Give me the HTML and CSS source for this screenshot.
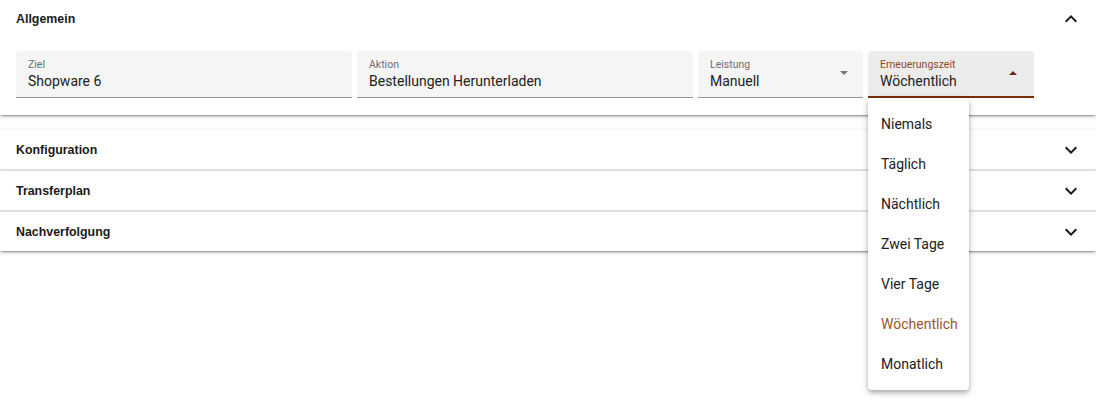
FILE: index.html
```html
<!DOCTYPE html>
<html>
<head>
  <title>Transfer bearbeiten</title>
  <link rel="stylesheet" href="styles.css">
</head>
<body>

<!-- ALLGEMEIN -->
<div class="panel expanded">
  <div class="panel-header">
    <span class="panel-title">Allgemein</span>
    <svg class="chevron" viewBox="0 0 24 24"><path d="M7.41 15.41L12 10.83l4.59 4.58L18 14l-6-6-6 6z"/></svg>
  </div>
  <div class="panel-body">
    <div class="field wide">
      <label>Ziel</label>
      <div class="value">Shopware 6</div>
    </div>
    <div class="field wide">
      <label>Aktion</label>
      <div class="value">Bestellungen Herunterladen</div>
    </div>
    <div class="field select">
      <label>Leistung</label>
      <div class="value">Manuell</div>
      <span class="arrow"></span>
    </div>
    <div class="field select focused">
      <label>Erneuerungszeit</label>
      <div class="value">Wöchentlich</div>
      <span class="arrow up"></span>
      <div class="menu">
        <div class="option">Niemals</div>
        <div class="option">Täglich</div>
        <div class="option">Nächtlich</div>
        <div class="option">Zwei Tage</div>
        <div class="option">Vier Tage</div>
        <div class="option selected">Wöchentlich</div>
        <div class="option">Monatlich</div>
      </div>
    </div>
  </div>
</div>

<!-- COLLAPSED PANELS -->
<div class="panel-group">
  <div class="panel">
    <div class="panel-header">
      <span class="panel-title">Konfiguration</span>
      <svg class="chevron" viewBox="0 0 24 24"><path d="M16.59 8.59L12 13.17 7.41 8.59 6 10l6 6 6-6z"/></svg>
    </div>
  </div>
  <div class="panel">
    <div class="panel-header">
      <span class="panel-title">Transferplan</span>
      <svg class="chevron" viewBox="0 0 24 24"><path d="M16.59 8.59L12 13.17 7.41 8.59 6 10l6 6 6-6z"/></svg>
    </div>
  </div>
  <div class="panel">
    <div class="panel-header">
      <span class="panel-title">Nachverfolgung</span>
      <svg class="chevron" viewBox="0 0 24 24"><path d="M16.59 8.59L12 13.17 7.41 8.59 6 10l6 6 6-6z"/></svg>
    </div>
  </div>
</div>

</body>
</html>
```

FILE: styles.css
```css
html, body {
  min-height: 100vh;
}
body {
  margin: 0;
  background: #ffffff;
  font-family: Roboto, "Liberation Sans", sans-serif;
  color: #212121;
}
.panel {
  background: #ffffff;
  box-shadow: 0 3px 1px -2px rgba(0,0,0,0.2), 0 2px 2px 0 rgba(0,0,0,0.14), 0 1px 5px 0 rgba(0,0,0,0.12);
}
.panel.expanded {
  margin-bottom: 15px;
}
.panel-group .panel {
  border-bottom: 2px solid #e6e6e6;
}
.panel-group .panel:last-child {
  border-bottom: none;
}
.panel-header {
  display: flex;
  align-items: center;
  justify-content: space-between;
  height: 39px;
  padding: 0 13px 0 16px;
}
.expanded .panel-header {
  height: 37px;
}
.panel-title {
  font-family: "Liberation Sans", Arial, sans-serif;
  font-weight: bold;
  font-size: 12.4px;
  color: #1a1a1a;
}
.chevron {
  width: 24px;
  height: 24px;
  fill: #1a1a1a;
}
.panel-body {
  display: flex;
  gap: 5px;
  padding: 14px 16px 17px;
}
.field {
  position: relative;
  box-sizing: border-box;
  height: 47px;
  width: 165px;
  padding: 7px 12px 0;
  background: #f5f5f5;
  border-radius: 4px 4px 0 0;
  border-bottom: 1px solid #9a9a9a;
}
.field.wide {
  width: 336px;
}
.field.focused {
  width: 166px;
  background: #ececec;
  border-bottom: 2px solid #7a2e0c;
}
.field label {
  display: block;
  font-size: 10.5px;
  line-height: 13px;
  color: #6f6f6f;
}
.field.focused label {
  color: #8d4a26;
}
.value {
  font-size: 14px;
  line-height: 20px;
}
.arrow {
  position: absolute;
  right: 15px;
  top: 20px;
  width: 0;
  height: 0;
  border-left: 4px solid transparent;
  border-right: 4px solid transparent;
  border-top: 4px solid #757575;
}
.arrow.up {
  right: 17px;
  border-top: none;
  border-bottom: 4px solid #6e2a0b;
}
.menu {
  position: absolute;
  top: calc(100% + 2px);
  left: 0;
  width: 101px;
  padding: 6px 0;
  background: #ffffff;
  border-radius: 4px;
  box-shadow: 0 2px 4px -1px rgba(0,0,0,0.2), 0 4px 5px 0 rgba(0,0,0,0.14), 0 1px 10px 0 rgba(0,0,0,0.12);
  z-index: 10;
}
.option {
  height: 40px;
  line-height: 40px;
  padding: 0 13px;
  font-size: 14px;
  color: #212121;
}
.option.selected {
  color: #9b5330;
}
```
